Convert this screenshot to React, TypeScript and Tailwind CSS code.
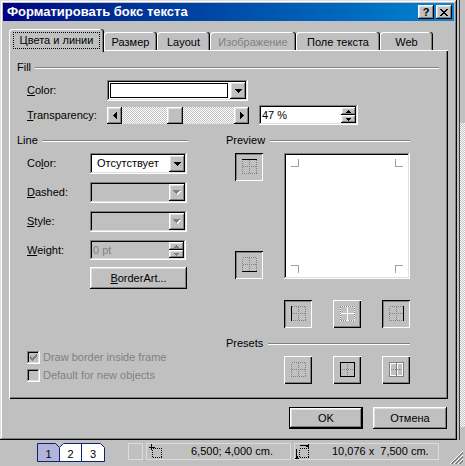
import React from "react";

const RAISED =
  "shadow-[inset_-1px_-1px_#000,inset_1px_1px_#fff,inset_-2px_-2px_#808080,inset_2px_2px_#dfdfdf]";
const SUNKEN =
  "shadow-[inset_-1px_-1px_#fff,inset_1px_1px_#808080,inset_-2px_-2px_#dfdfdf,inset_2px_2px_#000]";
const SMALL_RAISED = "shadow-[inset_1px_1px_#fff,inset_-1px_-1px_#000,inset_-2px_-2px_#808080]";
const SMALL_SUNKEN = "shadow-[inset_1px_1px_#000,inset_-1px_-1px_#fff,inset_2px_2px_#808080]";
const DEFAULT_BTN =
  "shadow-[inset_0_0_0_1px_#000,inset_-2px_-2px_#000,inset_2px_2px_#fff,inset_-3px_-3px_#808080,inset_3px_3px_#dfdfdf]";
const CHECKER = "bg-[repeating-conic-gradient(#c0c0c0_0_25%,#fff_0_50%)] bg-[length:2px_2px]";
const TAB =
  "h-[18px] pt-[2px] flex items-center justify-center rounded-t-[3px] shadow-[inset_-1px_0_#000,inset_-2px_0_#808080,inset_1px_1px_#fff]";

function DownArrow({ disabled }: { disabled?: boolean }) {
  if (disabled)
    return (
      <svg width="8" height="5" className="block" shapeRendering="crispEdges">
        <path d="M1 1h7v1H1zM2 2h5v1H2zM3 3h3v1H3zM4 4h1v1H4z" fill="#fff" />
        <path d="M0 0h7v1H0zM1 1h5v1H1zM2 2h3v1H2zM3 3h1v1H3z" fill="#808080" />
      </svg>
    );
  return (
    <svg width="7" height="4" className="block" shapeRendering="crispEdges">
      <path d="M0 0h7v1H0zM1 1h5v1H1zM2 2h3v1H2zM3 3h1v1H3z" fill="#000" />
    </svg>
  );
}

function LeftArrow() {
  return (
    <svg width="4" height="7" className="block" shapeRendering="crispEdges">
      <path d="M3 0h1v7H3zM2 1h1v5H2zM1 2h1v3H1zM0 3h1v1H0z" fill="#000" />
    </svg>
  );
}

function RightArrow() {
  return (
    <svg width="4" height="7" className="block" shapeRendering="crispEdges">
      <path d="M0 0h1v7H0zM1 1h1v5H1zM2 2h1v3H2zM3 3h1v1H3z" fill="#000" />
    </svg>
  );
}

function UpSmall({ c = "#000" }: { c?: string }) {
  return (
    <svg width="5" height="3" className="block" shapeRendering="crispEdges">
      <path d="M2 0h1v1H2zM1 1h3v1H1zM0 2h5v1H0z" fill={c} />
    </svg>
  );
}

function DownSmall({ c = "#000" }: { c?: string }) {
  return (
    <svg width="5" height="3" className="block" shapeRendering="crispEdges">
      <path d="M0 0h5v1H0zM1 1h3v1H1zM2 2h1v1H2z" fill={c} />
    </svg>
  );
}

function CloseGlyph() {
  return (
    <svg width="8" height="7" className="block" shapeRendering="crispEdges">
      <path
        d="M0 0h2v1H0zM6 0h2v1H6zM1 1h2v1H1zM5 1h2v1H5zM2 2h4v1H2zM3 3h2v1H3zM2 4h4v1H2zM1 5h2v1H1zM5 5h2v1H5zM0 6h2v1H0zM6 6h2v1H6z"
        fill="#000"
      />
    </svg>
  );
}

function CheckGlyph({ c }: { c: string }) {
  return (
    <svg width="7" height="7" className="block" shapeRendering="crispEdges">
      <path
        d="M6 0h1v1H6zM5 1h2v1H5zM0 2h1v1H0zM4 2h3v1H4zM0 3h2v1H0zM3 3h3v1H3zM0 4h5v1H0zM1 5h3v1H1zM2 6h1v1H2z"
        fill={c}
      />
    </svg>
  );
}

function GroupHeader({ label, gapClass, extra = "" }: { label: string; gapClass: string; extra?: string }) {
  return (
    <div className={`flex items-center h-[13px] ${extra}`}>
      <span>{label}</span>
      <div className={`flex-1 h-[2px] border-t border-b border-t-[#808080] border-b-white ${gapClass}`} />
    </div>
  );
}

function Grid({ c }: { c: string }) {
  return (
    <>
      <rect x="7.5" y="6.5" width="14" height="14" fill="none" stroke={c} strokeDasharray="1 1" />
      <line x1="14.5" y1="7" x2="14.5" y2="21" stroke={c} strokeDasharray="1 1" />
      <line x1="8" y1="13.5" x2="22" y2="13.5" stroke={c} strokeDasharray="1 1" />
    </>
  );
}

function BorderIcon({ kind }: { kind: string }) {
  return (
    <svg width="28" height="28" className="block" shapeRendering="crispEdges">
      {kind === "top" && (
        <>
          <Grid c="#808080" />
          <line x1="7" y1="6.5" x2="22" y2="6.5" stroke="#000" />
        </>
      )}
      {kind === "bottom" && (
        <>
          <Grid c="#808080" />
          <line x1="7" y1="20.5" x2="22" y2="20.5" stroke="#000" />
        </>
      )}
      {kind === "left" && (
        <>
          <Grid c="#808080" />
          <line x1="7.5" y1="6" x2="7.5" y2="21" stroke="#000" />
        </>
      )}
      {kind === "right" && (
        <>
          <Grid c="#808080" />
          <line x1="21.5" y1="6" x2="21.5" y2="21" stroke="#000" />
        </>
      )}
      {kind === "inside" && (
        <>
          <rect x="7.5" y="6.5" width="14" height="14" fill="none" stroke="#808080" />
          <rect x="7.5" y="6.5" width="14" height="14" fill="none" stroke="#fff" strokeDasharray="1 1" />
          <line x1="14.5" y1="7" x2="14.5" y2="21" stroke="#fff" />
          <line x1="8" y1="13.5" x2="21" y2="13.5" stroke="#fff" />
        </>
      )}
      {kind === "none" && <Grid c="#808080" />}
      {kind === "box" && (
        <>
          <rect x="7.5" y="6.5" width="14" height="14" fill="none" stroke="#000" />
          <line x1="14.5" y1="8" x2="14.5" y2="20" stroke="#808080" strokeDasharray="1 1" />
          <line x1="9" y1="13.5" x2="20" y2="13.5" stroke="#808080" strokeDasharray="1 1" />
        </>
      )}
      {kind === "all" && (
        <>
          <rect x="7.5" y="6.5" width="14" height="14" fill="none" stroke="#808080" />
          <rect x="8.5" y="7.5" width="12" height="12" fill="none" stroke="#fff" />
          <line x1="14.5" y1="7" x2="14.5" y2="21" stroke="#808080" />
          <line x1="15.5" y1="8" x2="15.5" y2="20" stroke="#fff" />
          <line x1="9" y1="13.5" x2="21" y2="13.5" stroke="#808080" strokeDasharray="1 1" />
        </>
      )}
    </svg>
  );
}

function Toggle({ kind, sunken }: { kind: string; sunken?: boolean }) {
  return (
    <div className={`w-[28px] h-[28px] bg-[#c0c0c0] ${sunken ? SMALL_SUNKEN : SMALL_RAISED}`}>
      <BorderIcon kind={kind} />
    </div>
  );
}

function TitleBar() {
  return (
    <div className="h-[18px] shrink-0 flex items-center bg-linear-to-r from-[#000080] to-[#1084d0] pl-[4px] pr-[2px]">
      <span className="flex-1 text-white font-bold text-[13px] leading-[18px] whitespace-nowrap">
        Форматировать бокс текста
      </span>
      <div className={`w-[16px] h-[14px] bg-[#c0c0c0] ${RAISED} flex items-center justify-center`}>
        <span className="font-bold text-[11px] leading-[11px]">?</span>
      </div>
      <div className={`ml-[2px] w-[16px] h-[14px] bg-[#c0c0c0] ${RAISED} flex items-center justify-center`}>
        <CloseGlyph />
      </div>
    </div>
  );
}

function Tabs() {
  return (
    <div className="flex items-end h-[21px] shrink-0">
      <div className="relative z-10 w-[95px] h-[23px] mb-[-2px] bg-[#c0c0c0] rounded-t-[3px] shadow-[inset_-1px_0_#000,inset_-2px_0_#808080,inset_1px_1px_#fff] flex justify-center pt-[3px]">
        <div className="w-[87px] h-[17px] border border-dotted border-black flex items-center justify-center whitespace-nowrap">
          Цвета и линии
        </div>
      </div>
      <div className={`w-[53px] ${TAB}`}>Размер</div>
      <div className={`w-[53px] ${TAB}`}>Layout</div>
      <div className={`w-[86px] ${TAB} text-[#808080]`}>Изображение</div>
      <div className={`w-[84px] ${TAB}`}>Поле текста</div>
      <div className={`w-[53px] ${TAB}`}>Web</div>
    </div>
  );
}

function FillCombo() {
  return (
    <div className={`w-[141px] h-[21px] bg-white ${SUNKEN} p-[2px] flex`}>
      <div className="flex-1 p-[1px] pr-[2px]">
        <div className="h-full border border-black bg-white" />
      </div>
      <div className={`w-[16px] bg-[#c0c0c0] ${RAISED} flex items-center justify-center`}>
        <DownArrow />
      </div>
    </div>
  );
}

function Combo({ text, disabled }: { text?: string; disabled?: boolean }) {
  return (
    <div className={`w-[97px] h-[21px] ${disabled ? "bg-[#c0c0c0]" : "bg-white"} ${SUNKEN} p-[2px] flex`}>
      <div className="flex-1 flex items-center pl-[5px] whitespace-nowrap overflow-hidden">{text}</div>
      <div className={`w-[16px] bg-[#c0c0c0] ${RAISED} flex items-center justify-center`}>
        <DownArrow disabled={disabled} />
      </div>
    </div>
  );
}

function Slider() {
  return (
    <div className="w-[142px] h-[17px] flex">
      <div className={`w-[15px] h-full bg-[#c0c0c0] ${RAISED} flex items-center justify-center`}>
        <LeftArrow />
      </div>
      <div className={`flex-1 h-full ${CHECKER} flex`}>
        <div className={`ml-[45px] w-[16px] h-full bg-[#c0c0c0] ${RAISED}`} />
      </div>
      <div className={`w-[15px] h-full bg-[#c0c0c0] ${RAISED} flex items-center justify-center`}>
        <RightArrow />
      </div>
    </div>
  );
}

function Spin({ text, disabled, widthClass }: { text: string; disabled?: boolean; widthClass: string }) {
  const c = disabled ? "#808080" : "#000";
  return (
    <div className={`${widthClass} h-[20px] ${disabled ? "bg-[#c0c0c0] text-[#808080]" : "bg-white"} ${SUNKEN} p-[2px] flex`}>
      <div className="flex-1 flex items-center pl-[1px] whitespace-nowrap">{text}</div>
      <div className="w-[15px] flex flex-col">
        <div className={`h-[8px] bg-[#c0c0c0] ${RAISED} flex items-center justify-center`}>
          <UpSmall c={c} />
        </div>
        <div className={`h-[8px] bg-[#c0c0c0] ${RAISED} flex items-center justify-center`}>
          <DownSmall c={c} />
        </div>
      </div>
    </div>
  );
}

function Checkbox({ label, checked }: { label: string; checked?: boolean }) {
  return (
    <div className="flex items-center h-[13px] pl-[10px] text-[#808080]">
      <div className={`w-[13px] h-[13px] bg-[#c0c0c0] ${SUNKEN} flex items-center justify-center`}>
        {checked && <CheckGlyph c="#808080" />}
      </div>
      <span className="ml-[3px] whitespace-nowrap">{label}</span>
    </div>
  );
}

function PreviewBox() {
  return (
    <div className={`ml-[21px] w-[126px] h-[126px] bg-white ${SUNKEN}`}>
      <svg width="126" height="126" className="block" shapeRendering="crispEdges">
        <path d="M7 13.5H14.5V6" fill="none" stroke="#a0a0a0" />
        <path d="M119 13.5H111.5V6" fill="none" stroke="#a0a0a0" />
        <path d="M7 112.5H14.5V120" fill="none" stroke="#a0a0a0" />
        <path d="M119 112.5H111.5V120" fill="none" stroke="#a0a0a0" />
      </svg>
    </div>
  );
}

function Panel() {
  return (
    <div className="w-[439px] h-[349px] shrink-0 bg-[#c0c0c0] shadow-[inset_1px_1px_#fff,inset_-1px_-1px_#000,inset_-2px_-2px_#808080] pl-[8px] pr-[9px] pt-[11px] flex flex-col">
      <GroupHeader label="Fill" gapClass="ml-[4px]" />
      <div className="flex items-center h-[21px] mt-[6px] pl-[10px]">
        <div className="w-[80px]">
          <u>C</u>olor:
        </div>
        <FillCombo />
      </div>
      <div className="flex items-center h-[20px] mt-[4px] pl-[10px]">
        <div className="w-[80px]">
          <u>T</u>ransparency:
        </div>
        <Slider />
        <div className="ml-[10px]">
          <Spin text="47 %" widthClass="w-[99px]" />
        </div>
      </div>
      <div className="flex mt-[9px]">
        <div className="w-[171px] flex flex-col">
          <GroupHeader label="Line" gapClass="ml-[4px]" />
          <div className="flex items-center h-[21px] mt-[6px] pl-[10px]">
            <div className="w-[63px]">
              Co<u>l</u>or:
            </div>
            <Combo text="Отсутствует" />
          </div>
          <div className="flex items-center h-[21px] mt-[8px] pl-[10px]">
            <div className="w-[63px]">
              <u>D</u>ashed:
            </div>
            <Combo disabled />
          </div>
          <div className="flex items-center h-[21px] mt-[8px] pl-[10px]">
            <div className="w-[63px]">
              <u>S</u>tyle:
            </div>
            <Combo disabled />
          </div>
          <div className="flex items-center h-[20px] mt-[8px] pl-[10px]">
            <div className="w-[63px]">
              <u>W</u>eight:
            </div>
            <Spin text="0 pt" disabled widthClass="w-[96px]" />
          </div>
          <div className="mt-[7px] pl-[73px]">
            <div className={`w-[97px] h-[22px] flex items-center justify-center ${RAISED}`}>
              <span>
                <u>B</u>orderArt...
              </span>
            </div>
          </div>
          <div className="mt-[62px] flex flex-col gap-[5px]">
            <Checkbox label="Draw border inside frame" checked />
            <Checkbox label="Default for new objects" />
          </div>
        </div>
        <div className="w-[184px] ml-[38px] flex flex-col">
          <GroupHeader label="Preview" gapClass="ml-[5px]" />
          <div className="flex mt-[6px] h-[126px]">
            <div className="ml-[9px] w-[28px] flex flex-col justify-between">
              <Toggle kind="top" sunken />
              <Toggle kind="bottom" sunken />
            </div>
            <PreviewBox />
          </div>
          <div className="flex gap-[21px] mt-[21px] pl-[58px]">
            <Toggle kind="left" sunken />
            <Toggle kind="inside" />
            <Toggle kind="right" sunken />
          </div>
          <GroupHeader label="Presets" gapClass="ml-[5px]" extra="mt-[9px]" />
          <div className="flex gap-[21px] mt-[6px] pl-[58px]">
            <Toggle kind="none" />
            <Toggle kind="box" />
            <Toggle kind="all" />
          </div>
        </div>
      </div>
    </div>
  );
}

function Dialog() {
  return (
    <div className="w-[457px] h-[440px] shrink-0 bg-[#c0c0c0] p-[3px] flex flex-col shadow-[inset_-1px_-1px_#000,inset_1px_1px_#dfdfdf,inset_-2px_-2px_#808080,inset_2px_2px_#fff]">
      <TitleBar />
      <div className="flex flex-col px-[6px] pt-[8px]">
        <Tabs />
        <Panel />
        <div className="flex justify-end gap-[10px] mt-[8px] pr-[1px]">
          <div className={`w-[74px] h-[22px] flex items-center justify-center ${DEFAULT_BTN}`}>OK</div>
          <div className={`w-[74px] h-[22px] flex items-center justify-center ${RAISED}`}>Отмена</div>
        </div>
      </div>
    </div>
  );
}

function RightStrip() {
  return (
    <div className="flex-1 flex">
      <div className="w-[2px]" />
      <div className="w-[1px] bg-[#404040]" />
      <div className="flex-1 flex flex-col">
        <div className="h-[123px]" />
        <div className={`flex-1 ${CHECKER}`} />
        <div className="h-[13px]" />
      </div>
    </div>
  );
}

function Pages() {
  const stroke = "#10207a";
  return (
    <svg width="68" height="20" className="block" shapeRendering="crispEdges">
      <path d="M0.5 1.5H18.5L22.5 5.5V19.5H0.5Z" fill="#b2b4da" stroke={stroke} shapeRendering="auto" />
      <path d="M22.5 5.5L26.5 1.5H44.5V19.5H22.5Z" fill="#fff" stroke={stroke} shapeRendering="auto" />
      <path d="M44.5 1.5H63.5L67.5 5.5V19.5H44.5Z" fill="#fff" stroke={stroke} shapeRendering="auto" />
      <text x="11.5" y="16" textAnchor="middle" fontSize="11" fontFamily="Liberation Sans, Arial, sans-serif" fill="#000">
        1
      </text>
      <text x="33.5" y="16" textAnchor="middle" fontSize="11" fontFamily="Liberation Sans, Arial, sans-serif" fill="#000">
        2
      </text>
      <text x="56" y="16" textAnchor="middle" fontSize="11" fontFamily="Liberation Sans, Arial, sans-serif" fill="#000">
        3
      </text>
    </svg>
  );
}

function PosIcon() {
  return (
    <svg width="13" height="15" className="block" shapeRendering="crispEdges">
      <path d="M2.5 0V6M0 3.5H6" stroke="#000" />
      <rect x="3.5" y="4.5" width="9" height="9" fill="none" stroke="#000" strokeDasharray="1 1" />
    </svg>
  );
}

function SizeIcon() {
  return (
    <svg width="15" height="15" className="block" shapeRendering="crispEdges">
      <path d="M5 1.5H13M11 0.5V2.5M12 0.5V2.5M13.5 0V4" stroke="#000" />
      <path d="M1.5 5V14M0.5 12H2.5M0.5 13H2.5M0 14.5H4" stroke="#000" />
      <rect x="4.5" y="4.5" width="9" height="9" fill="none" stroke="#000" strokeDasharray="1 1" />
    </svg>
  );
}

function Grip() {
  return (
    <svg width="16" height="16" className="block">
      {[0, 4, 8].map((k) => (
        <g key={k}>
          <line x1="16" y1={3 + k} x2={3 + k} y2="16" stroke="#fff" />
          <line x1="16" y1={4 + k} x2={4 + k} y2="16" stroke="#808080" />
          <line x1="16" y1={5 + k} x2={5 + k} y2="16" stroke="#808080" />
        </g>
      ))}
    </svg>
  );
}

function StatusBar() {
  return (
    <div className="flex-1 flex items-start pt-[2px] pl-[37px] pr-[2px]">
      <Pages />
      <div className="ml-[23px] mt-[1px] w-[15px] h-[17px] border border-[#dcdcdc]" />
      <div className="ml-[3px] mt-[1px] w-[145px] h-[17px] border border-[#dcdcdc] flex items-center">
        <div className="ml-[2px]">
          <PosIcon />
        </div>
        <span className="ml-[29px] whitespace-pre">6,500; 4,000 cm.</span>
      </div>
      <div className="ml-[3px] mt-[1px] w-[145px] h-[17px] border border-[#dcdcdc] flex items-center">
        <div>
          <SizeIcon />
        </div>
        <span className="ml-[22px] whitespace-pre">10,076 x  7,500 cm.</span>
      </div>
      <div className="ml-auto self-end mb-[2px]">
        <Grip />
      </div>
    </div>
  );
}

export default function App() {
  return (
    <div className="w-[465px] h-[466px] bg-[#c0c0c0] flex flex-col overflow-hidden font-['Liberation_Sans',Arial,sans-serif] text-[11px] leading-[13px] text-black select-none">
      <div className="flex h-[440px] shrink-0">
        <Dialog />
        <RightStrip />
      </div>
      <StatusBar />
    </div>
  );
}
